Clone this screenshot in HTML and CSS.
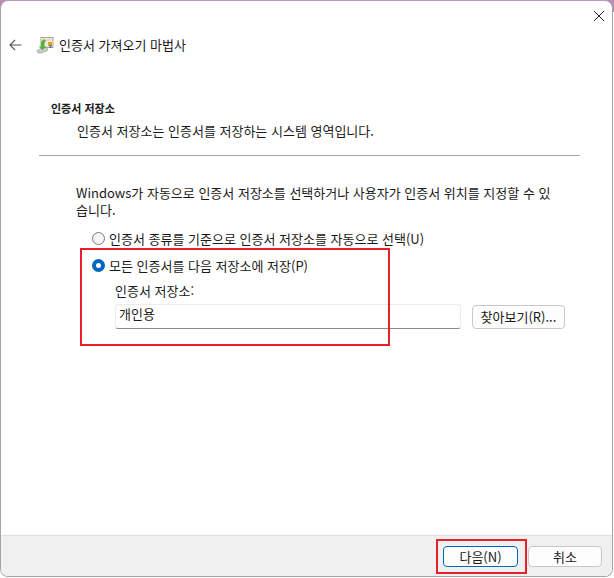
FILE: index.html
```html
<!DOCTYPE html>
<html lang="ko">
<head>
<meta charset="utf-8">
<title>인증서 가져오기 마법사</title>
<link rel="stylesheet" href="styles.css">
</head>
<body>
<div class="window">
  <div class="titlebar">
    <svg class="close" width="12" height="12" viewBox="0 0 12 12"><path d="M1 1L11 11M11 1L1 11" stroke="#222" stroke-width="1" fill="none"/></svg>
  </div>
  <div class="header">
    <svg class="back" width="13" height="12" viewBox="0 0 13 12"><path d="M12.5 6H1M6 1L1 6L6 11" stroke="#555" stroke-width="1.1" fill="none"/></svg>
    <svg class="wizard-icon" width="18" height="18" viewBox="0 0 18 18">
      <rect x="5" y="1.500" width="12" height="10" fill="#f3ead6" stroke="#b3a78d"/>
      <rect x="7" y="3.500" width="8" height="1" fill="#d8cdb5"/>
      <rect x="12" y="6" width="4" height="4" fill="#e3a21f"/>
      <rect x="13.500" y="9" width="2" height="3" fill="#3b78c4"/>
      <path d="M1 14.500L7 11.500H12L11 15L5 17H2Z" fill="#c9ccc8" stroke="#8d918d" stroke-width=".6"/>
      <path d="M8 3L10 5L8.500 6.500V10.500H10.500L6.500 14L2.500 10.500H5V6Z" fill="#55b13c"/>
    </svg>
    <span class="wizard-title">인증서 가져오기 마법사</span>
  </div>
  <div class="main">
    <div class="section-title">인증서 저장소</div>
    <div class="section-desc">인증서 저장소는 인증서를 저장하는 시스템 영역입니다.</div>
    <div class="rule"></div>
    <p class="intro">Windows가 자동으로 인증서 저장소를 선택하거나 사용자가 인증서 위치를 지정할 수 있습니다.</p>
    <div class="radio-row first">
      <span class="radio"></span>
      <span>인증서 종류를 기준으로 인증서 저장소를 자동으로 선택(U)</span>
    </div>
    <div class="radio-row second">
      <span class="radio checked"></span>
      <span>모든 인증서를 다음 저장소에 저장(P)</span>
    </div>
    <div class="store-label">인증서 저장소:</div>
    <div class="store-row">
      <div class="store-input">개인용</div>
      <div class="btn browse">찾아보기(R)...</div>
    </div>
    <div class="mark mark-store"></div>
  </div>
  <div class="footer">
    <div class="btn next">다음(N)</div>
    <div class="btn cancel">취소</div>
    <div class="mark mark-next"></div>
  </div>
</div>
</body>
</html>
```
FILE: styles.css
```css
html, body {
  margin: 0;
  height: 100%;
  background: #fff;
}
body {
  width: 614px;
  height: 578px;
  overflow: hidden;
  font-family: "Noto Sans CJK KR", "Noto Sans", sans-serif;
  font-size: 13px;
  color: #1a1a1a;
  background: linear-gradient(#b98db3 0 12px, #fff 12px);
}
.window {
  box-sizing: border-box;
  width: 613px;
  height: 577px;
  background: #fff;
  border: 1px solid #a3a3a3;
  border-top-color: #b79ab4;
  border-radius: 8px;
  display: flex;
  flex-direction: column;
  overflow: hidden;
  position: relative;
}
.titlebar {
  height: 30px;
  display: flex;
  justify-content: flex-end;
  flex: none;
}
.close {
  margin: 9px 7px 0 0;
}
.header {
  height: 28px;
  display: flex;
  align-items: center;
  flex: none;
  padding-left: 8px;
}
.back { margin-right: 14px; }
.wizard-icon { margin-right: 5px; }
.wizard-title {
  line-height: 18px;
}
.main {
  flex: 1;
  position: relative;
  padding-top: 41px;
}
.section-title {
  margin-left: 50px;
  font-weight: 700;
  font-size: 11px;
  line-height: 16px;
}
.section-desc {
  margin: 6px 0 0 76px;
  line-height: 18px;
}
.rule {
  height: 1px;
  margin: 15px 32px 0 38px;
  background: #a5a5a5;
}
.intro {
  margin: 28px 60px 0 75px;
  line-height: 17px;
}
.radio-row {
  display: flex;
  align-items: center;
  height: 18px;
  margin-left: 91px;
  gap: 4px;
}
.radio-row.first { margin-top: 11px; }
.radio-row.second { margin-top: 9px; }
.radio {
  box-sizing: border-box;
  width: 13px;
  height: 13px;
  border: 1px solid #7a7a7a;
  border-radius: 50%;
  background: #f5f5f5;
  flex: none;
}
.radio.checked {
  border: 4px solid #0067c0;
  background: #fff;
}
.store-label {
  margin: 8px 0 0 114px;
  line-height: 18px;
}
.store-row {
  display: flex;
  align-items: center;
  margin: 4px 0 0 114px;
}
.store-input {
  box-sizing: border-box;
  width: 346px;
  height: 25px;
  padding: 0 3px;
  line-height: 18px;
  border: 1px solid #ececec;
  border-bottom: 1px solid #8a8a8a;
  border-radius: 3px;
  background: #fff;
}
.btn {
  box-sizing: border-box;
  height: 24px;
  display: flex;
  align-items: center;
  justify-content: center;
  border: 1px solid #c8c8c8;
  border-radius: 4px;
  background: #fdfdfd;
}
.browse {
  width: 93px;
  margin-left: 11px;
}
.mark {
  position: absolute;
  box-sizing: border-box;
  border: 2px solid #e8202a;
  pointer-events: none;
}
.mark-store {
  left: 79px;
  top: 189px;
  width: 310px;
  height: 98px;
}
.footer {
  flex: none;
  height: 41px;
  box-sizing: border-box;
  background: #f0f0f0;
  border-top: 1px solid #dfdfdf;
  display: flex;
  justify-content: flex-end;
  align-items: flex-start;
  padding: 10px 10px 0 0;
  gap: 10px;
  position: relative;
}
.footer .btn {
  height: 21px;
}
.next {
  width: 75px;
  border-color: #0067c0;
}
.cancel { width: 74px; }
.mark-next {
  left: 435px;
  top: 3px;
  width: 91px;
  height: 35px;
}
```
